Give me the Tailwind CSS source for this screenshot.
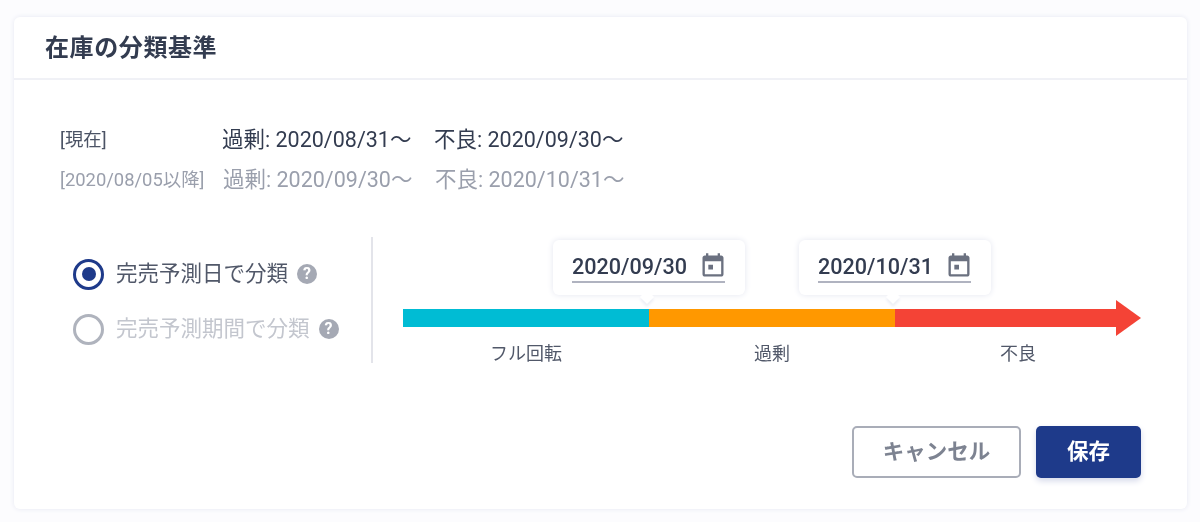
<!DOCTYPE html>
<html lang="ja">
<head>
  <meta charset="UTF-8" />
  <title>在庫の分類基準</title>
  <script src="https://cdn.jsdelivr.net/npm/@tailwindcss/browser@4"></script>
</head>
<body class="bg-[#fcfcfe] h-[522px] overflow-hidden pt-[17px] pl-[14px] font-['Roboto','Noto_Sans_CJK_JP',sans-serif] text-[#333c50]">
  <div class="w-[1173px] h-[492px] bg-white rounded-[6px] shadow-[0_0_5px_#e6e8f2] flex flex-col blur-[0.6px]">
    <!-- Header -->
    <div class="h-[63px] border-b-2 border-[#f0f1f6] pl-[31px] flex items-center">
      <h1 class="text-[24px] font-bold tracking-[0.6px]">在庫の分類基準</h1>
    </div>

    <!-- Current / upcoming thresholds -->
    <div class="pt-[48px] pl-[46px] flex flex-col gap-[16px]">
      <div class="flex items-center h-[24px]">
        <span class="w-[162px] text-[18.4px] text-[#4b5365]">[現在]</span>
        <span class="text-[21.5px] w-[212px]">過剰: 2020/08/31〜</span>
        <span class="text-[21.5px]">不良: 2020/09/30〜</span>
      </div>
      <div class="flex items-center h-[24px] text-[#9a9fac]">
        <span class="w-[163px] text-[18.4px] whitespace-nowrap">[2020/08/05以降]</span>
        <span class="text-[21.5px] w-[212px]">過剰: 2020/09/30〜</span>
        <span class="text-[21.5px]">不良: 2020/10/31〜</span>
      </div>
    </div>

    <!-- Classification settings -->
    <div class="mt-[45px] h-[129px] pl-[59px] flex">
      <div class="w-[300px] h-[126px] border-r-2 border-[#e3e4ea] flex flex-col gap-[25px] pt-[22px]">
        <label class="flex items-center h-[30px]">
          <span class="w-[31px] h-[31px] rounded-full border-[3px] border-[#1e3a8a] flex items-center justify-center">
            <span class="w-[14px] h-[14px] rounded-full bg-[#1e3a8a]"></span>
          </span>
          <span class="ml-[12px] text-[21.5px] text-[#515869] whitespace-nowrap">完売予測日で分類</span>
          <span class="ml-[9px] w-[20px] h-[20px] rounded-full bg-[#a5a9b4] text-white text-[16px] font-bold flex items-center justify-center">?</span>
        </label>
        <label class="flex items-center h-[30px]">
          <span class="w-[31px] h-[31px] rounded-full border-[3px] border-[#afb3bd]"></span>
          <span class="ml-[12px] text-[21.5px] text-[#c3c6ce] whitespace-nowrap">完売予測期間で分類</span>
          <span class="ml-[9px] w-[20px] h-[20px] rounded-full bg-[#a5a9b4] text-white text-[16px] font-bold flex items-center justify-center">?</span>
        </label>
      </div>

      <!-- Timeline -->
      <div class="relative ml-[30px] w-[738px] pt-[72px]">
        <div class="relative h-[18px] flex">
          <div class="w-[246px] bg-[#00bcd4]"></div>
          <div class="w-[246px] bg-[#ff9800]"></div>
          <div class="w-[222px] bg-[#f44336]"></div>
          <svg class="absolute left-[713px] top-[-9px]" width="25" height="36" viewBox="0 0 25 36"><path d="M0 0L25 18L0 36Z" fill="#f44336"/></svg>
        </div>
        <div class="flex text-[18px] text-[#515869] mt-[13px]">
          <span class="w-[246px] text-center">フル回転</span>
          <span class="w-[246px] text-center">過剰</span>
          <span class="w-[246px] text-center">不良</span>
        </div>

        <!-- Date popovers -->
        <div class="absolute left-[150px] top-[3px] w-[192px] h-[55px] bg-white rounded-[6px] shadow-[0_0_6px_#e4e6f0] pl-[19px] pt-[10px]">
          <div class="w-[153px] h-[33px] border-b-2 border-[#b0b3c0] flex items-center justify-between">
            <span class="text-[21.6px] font-medium mt-[3px]">2020/09/30</span>
            <svg class="mr-[-2px] mt-[1px]" width="28" height="28" viewBox="0 0 24 24" fill="#6b7180"><path d="M19 3h-1V1h-2v2H8V1H6v2H5c-1.1 0-2 .9-2 2v14c0 1.1.9 2 2 2h14c1.1 0 2-.9 2-2V5c0-1.1-.9-2-2-2zm0 16H5V8h14v11zM8 11h4v4H8z"/></svg>
          </div>
          <div class="absolute left-[89px] top-[54px] w-[10px] h-[10px] bg-white rotate-45 -translate-y-[2px] shadow-[2px_2px_3px_#eceef5]"></div>
        </div>
        <div class="absolute left-[396px] top-[3px] w-[192px] h-[55px] bg-white rounded-[6px] shadow-[0_0_6px_#e4e6f0] pl-[19px] pt-[10px]">
          <div class="w-[153px] h-[33px] border-b-2 border-[#b0b3c0] flex items-center justify-between">
            <span class="text-[21.6px] font-medium mt-[3px]">2020/10/31</span>
            <svg class="mr-[-2px] mt-[1px]" width="28" height="28" viewBox="0 0 24 24" fill="#6b7180"><path d="M19 3h-1V1h-2v2H8V1H6v2H5c-1.1 0-2 .9-2 2v14c0 1.1.9 2 2 2h14c1.1 0 2-.9 2-2V5c0-1.1-.9-2-2-2zm0 16H5V8h14v11zM8 11h4v4H8z"/></svg>
          </div>
          <div class="absolute left-[89px] top-[54px] w-[10px] h-[10px] bg-white rotate-45 -translate-y-[2px] shadow-[2px_2px_3px_#eceef5]"></div>
        </div>
      </div>
    </div>

    <!-- Actions -->
    <div class="mt-[60px] pr-[46px] flex justify-end gap-[15px]">
      <button class="w-[169px] h-[52px] rounded-[5px] border-2 border-[#a9adb8] bg-white text-[21.5px] font-bold text-[#7d8391]">キャンセル</button>
      <button class="w-[105px] h-[52px] rounded-[5px] bg-[#1e3a8a] text-[21.5px] font-bold text-white shadow-[0_3px_6px_#d5d9ea]">保存</button>
    </div>
  </div>
</body>
</html>
